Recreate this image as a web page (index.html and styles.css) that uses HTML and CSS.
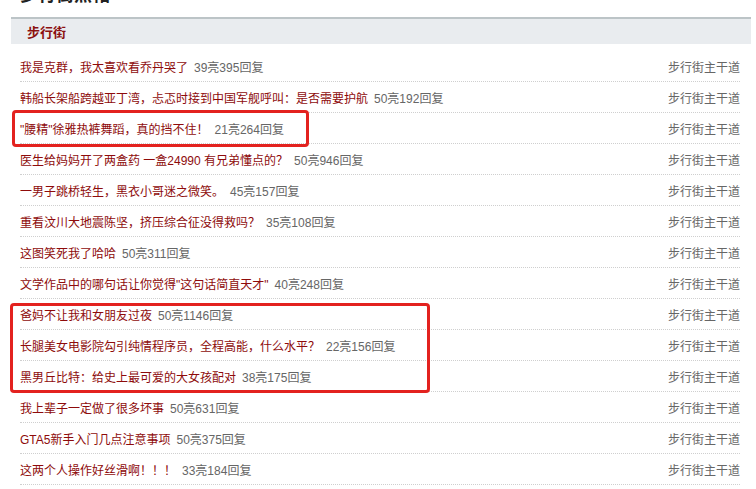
FILE: index.html
```html
<!DOCTYPE html>
<html lang="zh-CN">
<head>
<meta charset="utf-8">
<title>步行街热帖</title>
<link rel="stylesheet" href="styles.css">
</head>
<body>
<div class="page">
  <h2 class="page-title">步行街热帖</h2>
  <div class="panel">
    <div class="panel-head"><span class="panel-name">步行街</span></div>
    <ul class="list">
      <li class="row"><span class="main"><a class="title">我是克群，我太喜欢看乔丹哭了</a><span class="count">39亮395回复</span></span><span class="board">步行街主干道</span></li>
      <li class="row"><span class="main"><a class="title">韩船长架船跨越亚丁湾，忐忑时接到中国军舰呼叫：是否需要护航</a><span class="count">50亮192回复</span></span><span class="board">步行街主干道</span></li>
      <li class="row"><span class="main"><a class="title">"腰精"徐雅热裤舞蹈，真的挡不住！</a><span class="count">21亮264回复</span></span><span class="board">步行街主干道</span></li>
      <li class="row"><span class="main"><a class="title">医生给妈妈开了两盒药 一盒24990 有兄弟懂点的？</a><span class="count">50亮946回复</span></span><span class="board">步行街主干道</span></li>
      <li class="row"><span class="main"><a class="title">一男子跳桥轻生，黑衣小哥迷之微笑。</a><span class="count">45亮157回复</span></span><span class="board">步行街主干道</span></li>
      <li class="row"><span class="main"><a class="title">重看汶川大地震陈坚，挤压综合征没得救吗？</a><span class="count">35亮108回复</span></span><span class="board">步行街主干道</span></li>
      <li class="row"><span class="main"><a class="title">这图笑死我了哈哈</a><span class="count">50亮311回复</span></span><span class="board">步行街主干道</span></li>
      <li class="row"><span class="main"><a class="title">文学作品中的哪句话让你觉得"这句话简直天才"</a><span class="count">40亮248回复</span></span><span class="board">步行街主干道</span></li>
      <li class="row"><span class="main"><a class="title">爸妈不让我和女朋友过夜</a><span class="count">50亮1146回复</span></span><span class="board">步行街主干道</span></li>
      <li class="row"><span class="main"><a class="title">长腿美女电影院勾引纯情程序员，全程高能，什么水平？</a><span class="count">22亮156回复</span></span><span class="board">步行街主干道</span></li>
      <li class="row"><span class="main"><a class="title">黑男丘比特：给史上最可爱的大女孩配对</a><span class="count">38亮175回复</span></span><span class="board">步行街主干道</span></li>
      <li class="row"><span class="main"><a class="title">我上辈子一定做了很多坏事</a><span class="count">50亮631回复</span></span><span class="board">步行街主干道</span></li>
      <li class="row"><span class="main"><a class="title">GTA5新手入门几点注意事项</a><span class="count">50亮375回复</span></span><span class="board">步行街主干道</span></li>
      <li class="row"><span class="main"><a class="title">这两个人操作好丝滑啊！！！</a><span class="count">33亮184回复</span></span><span class="board">步行街主干道</span></li>
    </ul>
  </div>
  <div class="mark mark-one"></div>
  <div class="mark mark-two"></div>
</div>
</body>
</html>
```

FILE: styles.css
```css
html, body {
  margin: 0;
  padding: 0;
  background: #ffffff;
}

.page {
  position: relative;
  width: 756px;
  height: 489px;
  overflow: hidden;
  font-family: "Liberation Sans", "Noto Sans CJK SC", sans-serif;
  font-size: 12px;
}

.page-title {
  margin: -14px 0 0 20px;
  height: 18px;
  line-height: 18px;
  font-size: 18px;
  font-weight: bold;
  color: #222;
}

.panel {
  margin: 13px 5px 0 11px;
}

.panel-head {
  height: 25px;
  border-top: 2px solid #bcc4c7;
  background: #e9ecef;
  display: flex;
  align-items: center;
  padding-left: 16px;
}

.panel-name {
  font-weight: bold;
  font-size: 13px;
  color: #8c1010;
}

.list {
  list-style: none;
  margin: 0;
  padding: 7px 11px 0 9px;
}

.row {
  height: 30px;
  border-bottom: 1px dotted #cfcfcf;
  display: flex;
  align-items: center;
  justify-content: space-between;
}

.title {
  color: #8e0b0b;
  text-decoration: none;
}

.count {
  color: #666666;
  margin-left: 6px;
}

.board {
  color: #666666;
}

.mark {
  position: absolute;
  border: 3px solid #e3221f;
  border-radius: 4px;
  box-sizing: border-box;
}

.mark-one {
  left: 12px;
  top: 110px;
  width: 297px;
  height: 37px;
}

.mark-two {
  left: 10px;
  top: 303px;
  width: 420px;
  height: 90px;
}
```
